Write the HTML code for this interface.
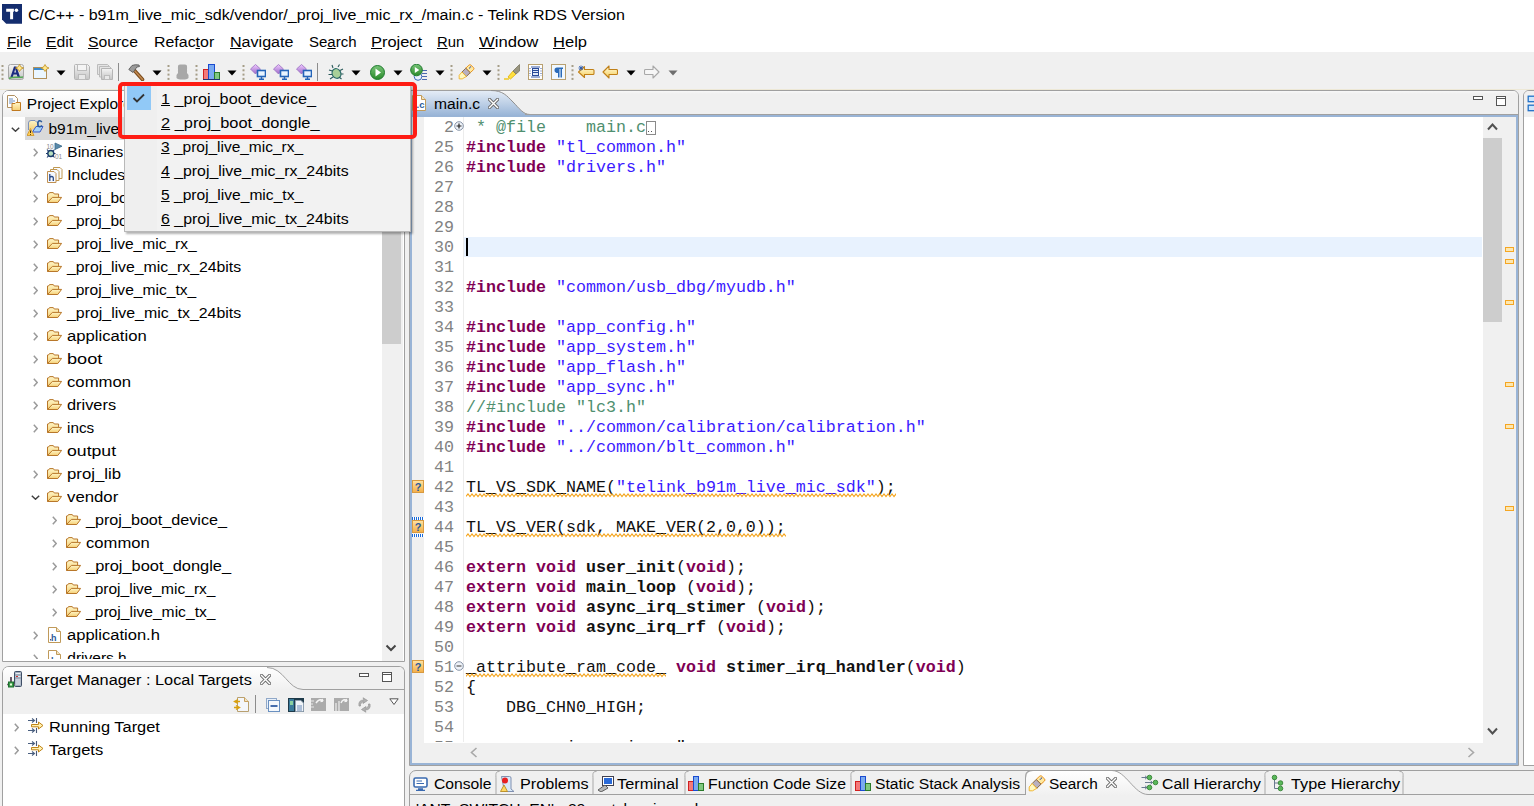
<!DOCTYPE html>
<html><head><meta charset="utf-8"><style>
html,body{margin:0;padding:0;}
body{width:1534px;height:806px;overflow:hidden;position:relative;background:#f0f0f0;font-family:"Liberation Sans",sans-serif;}
u{text-decoration:underline;text-decoration-thickness:1px;text-underline-offset:1px;}

</style></head><body>
<div style="position:absolute;left:0px;top:0px;width:1534px;height:52px;background:#fff"></div>
<svg style="position:absolute;left:0px;top:2px" width="26" height="24" viewBox="0 0 26 24">
<path d="M2 2H22V21.8H6.2L2 17.6Z" fill="#142d6e"/>
<path d="M6.2 6.8H13.9V9.8H13.1V17.3H10.1V9.8H6.2Z" fill="#fff"/>
<circle cx="16.4" cy="8.3" r="1.8" fill="#fff"/>
</svg>
<div id="t1" style="position:absolute;left:27.5px;top:6px;font:normal 15.5px/18px 'Liberation Sans', sans-serif;color:#000;white-space:pre;transform:scaleX(1.0362);transform-origin:0 0;">C/C++ - b91m_live_mic_sdk/vendor/_proj_live_mic_rx_/main.c - Telink RDS Version</div>
<div id="t2" style="position:absolute;left:7.3px;top:33px;font:normal 15.5px/18px 'Liberation Sans', sans-serif;color:#000;white-space:pre;transform:scaleX(0.9766);transform-origin:0 0;"><u>F</u>ile</div>
<div id="t3" style="position:absolute;left:46.3px;top:33px;font:normal 15.5px/18px 'Liberation Sans', sans-serif;color:#000;white-space:pre;transform:scaleX(1.0180);transform-origin:0 0;"><u>E</u>dit</div>
<div id="t4" style="position:absolute;left:88px;top:33px;font:normal 15.5px/18px 'Liberation Sans', sans-serif;color:#000;white-space:pre;transform:scaleX(1.0178);transform-origin:0 0;"><u>S</u>ource</div>
<div id="t5" style="position:absolute;left:153.8px;top:33px;font:normal 15.5px/18px 'Liberation Sans', sans-serif;color:#000;white-space:pre;transform:scaleX(1.0271);transform-origin:0 0;">Refac<u>t</u>or</div>
<div id="t6" style="position:absolute;left:229.6px;top:33px;font:normal 15.5px/18px 'Liberation Sans', sans-serif;color:#000;white-space:pre;transform:scaleX(1.0362);transform-origin:0 0;"><u>N</u>avigate</div>
<div id="t7" style="position:absolute;left:308.8px;top:33px;font:normal 15.5px/18px 'Liberation Sans', sans-serif;color:#000;white-space:pre;transform:scaleX(0.9666);transform-origin:0 0;">Se<u>a</u>rch</div>
<div id="t8" style="position:absolute;left:371.4px;top:33px;font:normal 15.5px/18px 'Liberation Sans', sans-serif;color:#000;white-space:pre;transform:scaleX(1.0591);transform-origin:0 0;"><u>P</u>roject</div>
<div id="t9" style="position:absolute;left:437px;top:33px;font:normal 15.5px/18px 'Liberation Sans', sans-serif;color:#000;white-space:pre;transform:scaleX(0.9560);transform-origin:0 0;"><u>R</u>un</div>
<div id="t10" style="position:absolute;left:479.4px;top:33px;font:normal 15.5px/18px 'Liberation Sans', sans-serif;color:#000;white-space:pre;transform:scaleX(1.0736);transform-origin:0 0;"><u>W</u>indow</div>
<div id="t11" style="position:absolute;left:553.2px;top:33px;font:normal 15.5px/18px 'Liberation Sans', sans-serif;color:#000;white-space:pre;transform:scaleX(1.0661);transform-origin:0 0;"><u>H</u>elp</div>
<div style="position:absolute;left:0px;top:89px;width:1534px;height:1px;background:#ede8d6"></div>
<div style="position:absolute;left:2px;top:90px;width:403px;height:572px;box-sizing:border-box;border:1px solid #a0a0a0;border-top-left-radius:7px;border-top-right-radius:6px;background:#fff;"></div>
<div style="position:absolute;left:3px;top:91px;width:401px;height:26px;background:linear-gradient(#fdfdfd,#f0f0f0);border-top-left-radius:6px;border-top-right-radius:5px;"></div>
<div style="position:absolute;left:382px;top:117px;width:21px;height:544px;background:#f0f0f0"></div>
<div style="position:absolute;left:382px;top:117px;width:19px;height:227px;background:#cdcdcd"></div>
<svg style="position:absolute;left:385px;top:643px" width="12" height="10"><path d="M1.5 2.5L6 7L10.5 2.5" stroke="#454545" stroke-width="2" fill="none"/></svg>
<div style="position:absolute;left:2px;top:666px;width:403px;height:140px;box-sizing:border-box;border:1px solid #a0a0a0;border-bottom:none;border-top-left-radius:7px;border-top-right-radius:6px;background:#fff;"></div>
<div style="position:absolute;left:3px;top:667px;width:401px;height:47px;background:#f0f0f0;border-top-left-radius:6px;border-top-right-radius:5px;"></div>
<div style="position:absolute;left:409px;top:90px;width:1110px;height:676px;box-sizing:border-box;border:1px solid #a0a0a0;border-top-right-radius:6px;background:#f0f0f0;"></div>
<div style="position:absolute;left:410px;top:91px;width:1108px;height:24px;background:linear-gradient(#f8f8f8 0,#f0f0f0 3px);border-top-right-radius:5px;"></div>
<div style="position:absolute;left:410px;top:114px;width:1108px;height:1px;background:#a0a0a0"></div>
<div style="position:absolute;left:410px;top:115px;width:1108px;height:650px;box-sizing:border-box;border:2px solid #99b4d6;border-top-width:2px;background:#f0f0f0;"></div>
<div style="position:absolute;left:424px;top:117px;width:1059px;height:626px;background:#fff"></div>
<div style="position:absolute;left:464px;top:237px;width:1018px;height:20px;background:#e8f2fe"></div>
<div style="position:absolute;left:1483px;top:138px;width:19px;height:184px;background:#cdcdcd"></div>
<div style="position:absolute;left:1523px;top:90px;width:20px;height:676px;box-sizing:border-box;border:1px solid #a0a0a0;border-top-left-radius:6px;background:#fff;"></div>
<div style="position:absolute;left:1524px;top:91px;width:12px;height:26px;background:#f0f0f0;border-top-left-radius:5px;"></div>
<div style="position:absolute;left:409px;top:770px;width:1130px;height:40px;box-sizing:border-box;border:1px solid #a0a0a0;border-top-left-radius:7px;background:#f0f0f0;"></div>
<div style="position:absolute;left:410px;top:794px;width:1130px;height:1px;background:#a0a0a0"></div>
<svg width="0" height="0" style="position:absolute">
<defs>
<linearGradient id="gfold" x1="0" y1="0" x2="0" y2="1"><stop offset="0" stop-color="#fff6c8"/><stop offset="1" stop-color="#f5cf74"/></linearGradient>
<symbol id="folder" viewBox="0 0 15 11">
<path d="M0.5 10.5V2H1.5L2.5 0.6H6.3L7.3 2H11.6V5.4" fill="url(#gfold)" stroke="#b8772a" stroke-width="1"/>
<path d="M0.5 10.5L5.4 5.4H14.6L10.8 10.5Z" fill="url(#gfold)" stroke="#b8772a" stroke-width="1" stroke-linejoin="round"/>
</symbol>
<symbol id="chevr" viewBox="0 0 5 9"><path d="M0.8 0.8L4.2 4.5L0.8 8.2" fill="none" stroke="#9a9a9a" stroke-width="1.5"/></symbol>
<symbol id="chevd" viewBox="0 0 9 5"><path d="M0.8 0.8L4.5 4.2L8.2 0.8" fill="none" stroke="#404040" stroke-width="1.5"/></symbol>
<symbol id="hfile" viewBox="0 0 13 16">
<path d="M0.5 0.5H8.5L12.5 4.5V15.5H0.5Z" fill="#fff" stroke="#c09a5a"/>
<path d="M8.5 0.5V4.5H12.5" fill="#f3e3bf" stroke="#c09a5a"/>
<text x="3" y="13.5" font-family="Liberation Sans" font-weight="bold" font-size="9" fill="#2c5a9a">h</text>
<rect x="2" y="12" width="1.2" height="1.5" fill="#2c5a9a"/>
</symbol>
</defs></svg>
<div style="position:absolute;left:25px;top:117px;width:357px;height:23px;background:#d9d9d9"></div>
<div style="position:absolute;left:4px;top:116px;width:378px;height:543px;overflow:hidden">
<svg style="position:absolute;left:7px;top:10.5px" width="9" height="5"><use href="#chevd"/></svg>
<div id="t12" style="position:absolute;left:44.5px;top:3.5999999999999943px;font:normal 15.5px/18px 'Liberation Sans', sans-serif;color:#000;white-space:pre;">b91m_live_mic_sdk</div>
<svg style="position:absolute;left:29px;top:32px" width="5" height="9"><use href="#chevr"/></svg>
<div id="t13" style="position:absolute;left:63.3px;top:26.599999999999994px;font:normal 15.5px/18px 'Liberation Sans', sans-serif;color:#000;white-space:pre;">Binaries</div>
<svg style="position:absolute;left:29px;top:55px" width="5" height="9"><use href="#chevr"/></svg>
<div id="t14" style="position:absolute;left:63.3px;top:49.599999999999994px;font:normal 15.5px/18px 'Liberation Sans', sans-serif;color:#000;white-space:pre;">Includes</div>
<svg style="position:absolute;left:29px;top:78px" width="5" height="9"><use href="#chevr"/></svg>
<svg style="position:absolute;left:43.3px;top:76px" width="15" height="11"><use href="#folder" width="15" height="11"/></svg>
<div id="t15" style="position:absolute;left:63.3px;top:72.6px;font:normal 15.5px/18px 'Liberation Sans', sans-serif;color:#000;white-space:pre;">_proj_boot_device_</div>
<svg style="position:absolute;left:29px;top:101px" width="5" height="9"><use href="#chevr"/></svg>
<svg style="position:absolute;left:43.3px;top:99px" width="15" height="11"><use href="#folder" width="15" height="11"/></svg>
<div id="t16" style="position:absolute;left:63.3px;top:95.6px;font:normal 15.5px/18px 'Liberation Sans', sans-serif;color:#000;white-space:pre;">_proj_boot_dongle_</div>
<svg style="position:absolute;left:29px;top:124px" width="5" height="9"><use href="#chevr"/></svg>
<svg style="position:absolute;left:43.3px;top:122px" width="15" height="11"><use href="#folder" width="15" height="11"/></svg>
<div id="t17" style="position:absolute;left:63.3px;top:118.6px;font:normal 15.5px/18px 'Liberation Sans', sans-serif;color:#000;white-space:pre;transform:scaleX(1.0036);transform-origin:0 0;">_proj_live_mic_rx_</div>
<svg style="position:absolute;left:29px;top:147px" width="5" height="9"><use href="#chevr"/></svg>
<svg style="position:absolute;left:43.3px;top:145px" width="15" height="11"><use href="#folder" width="15" height="11"/></svg>
<div id="t18" style="position:absolute;left:63.3px;top:141.60000000000002px;font:normal 15.5px/18px 'Liberation Sans', sans-serif;color:#000;white-space:pre;transform:scaleX(1.0211);transform-origin:0 0;">_proj_live_mic_rx_24bits</div>
<svg style="position:absolute;left:29px;top:170px" width="5" height="9"><use href="#chevr"/></svg>
<svg style="position:absolute;left:43.3px;top:168px" width="15" height="11"><use href="#folder" width="15" height="11"/></svg>
<div id="t19" style="position:absolute;left:63.3px;top:164.60000000000002px;font:normal 15.5px/18px 'Liberation Sans', sans-serif;color:#000;white-space:pre;transform:scaleX(1.0072);transform-origin:0 0;">_proj_live_mic_tx_</div>
<svg style="position:absolute;left:29px;top:193px" width="5" height="9"><use href="#chevr"/></svg>
<svg style="position:absolute;left:43.3px;top:191px" width="15" height="11"><use href="#folder" width="15" height="11"/></svg>
<div id="t20" style="position:absolute;left:63.3px;top:187.60000000000002px;font:normal 15.5px/18px 'Liberation Sans', sans-serif;color:#000;white-space:pre;transform:scaleX(1.0263);transform-origin:0 0;">_proj_live_mic_tx_24bits</div>
<svg style="position:absolute;left:29px;top:216px" width="5" height="9"><use href="#chevr"/></svg>
<svg style="position:absolute;left:43.3px;top:214px" width="15" height="11"><use href="#folder" width="15" height="11"/></svg>
<div id="t21" style="position:absolute;left:63.3px;top:210.60000000000002px;font:normal 15.5px/18px 'Liberation Sans', sans-serif;color:#000;white-space:pre;transform:scaleX(1.0754);transform-origin:0 0;">application</div>
<svg style="position:absolute;left:29px;top:239px" width="5" height="9"><use href="#chevr"/></svg>
<svg style="position:absolute;left:43.3px;top:237px" width="15" height="11"><use href="#folder" width="15" height="11"/></svg>
<div id="t22" style="position:absolute;left:63.3px;top:233.60000000000002px;font:normal 15.5px/18px 'Liberation Sans', sans-serif;color:#000;white-space:pre;transform:scaleX(1.1733);transform-origin:0 0;">boot</div>
<svg style="position:absolute;left:29px;top:262px" width="5" height="9"><use href="#chevr"/></svg>
<svg style="position:absolute;left:43.3px;top:260px" width="15" height="11"><use href="#folder" width="15" height="11"/></svg>
<div id="t23" style="position:absolute;left:63.3px;top:256.6px;font:normal 15.5px/18px 'Liberation Sans', sans-serif;color:#000;white-space:pre;transform:scaleX(1.0784);transform-origin:0 0;">common</div>
<svg style="position:absolute;left:29px;top:285px" width="5" height="9"><use href="#chevr"/></svg>
<svg style="position:absolute;left:43.3px;top:283px" width="15" height="11"><use href="#folder" width="15" height="11"/></svg>
<div id="t24" style="position:absolute;left:63.3px;top:279.6px;font:normal 15.5px/18px 'Liberation Sans', sans-serif;color:#000;white-space:pre;transform:scaleX(1.0556);transform-origin:0 0;">drivers</div>
<svg style="position:absolute;left:29px;top:308px" width="5" height="9"><use href="#chevr"/></svg>
<svg style="position:absolute;left:43.3px;top:306px" width="15" height="11"><use href="#folder" width="15" height="11"/></svg>
<div id="t25" style="position:absolute;left:63.3px;top:302.6px;font:normal 15.5px/18px 'Liberation Sans', sans-serif;color:#000;white-space:pre;transform:scaleX(0.9863);transform-origin:0 0;">incs</div>
<svg style="position:absolute;left:43.3px;top:329px" width="15" height="11"><use href="#folder" width="15" height="11"/></svg>
<div id="t26" style="position:absolute;left:63.3px;top:325.6px;font:normal 15.5px/18px 'Liberation Sans', sans-serif;color:#000;white-space:pre;transform:scaleX(1.1390);transform-origin:0 0;">output</div>
<svg style="position:absolute;left:29px;top:354px" width="5" height="9"><use href="#chevr"/></svg>
<svg style="position:absolute;left:43.3px;top:352px" width="15" height="11"><use href="#folder" width="15" height="11"/></svg>
<div id="t27" style="position:absolute;left:63.3px;top:348.6px;font:normal 15.5px/18px 'Liberation Sans', sans-serif;color:#000;white-space:pre;transform:scaleX(1.0803);transform-origin:0 0;">proj_lib</div>
<svg style="position:absolute;left:26.5px;top:378.5px" width="9" height="5"><use href="#chevd"/></svg>
<svg style="position:absolute;left:43.3px;top:375px" width="15" height="11"><use href="#folder" width="15" height="11"/></svg>
<div id="t28" style="position:absolute;left:63.3px;top:371.6px;font:normal 15.5px/18px 'Liberation Sans', sans-serif;color:#000;white-space:pre;transform:scaleX(1.0821);transform-origin:0 0;">vendor</div>
<svg style="position:absolute;left:48px;top:400px" width="5" height="9"><use href="#chevr"/></svg>
<svg style="position:absolute;left:62.3px;top:398px" width="15" height="11"><use href="#folder" width="15" height="11"/></svg>
<div id="t29" style="position:absolute;left:82.3px;top:394.6px;font:normal 15.5px/18px 'Liberation Sans', sans-serif;color:#000;white-space:pre;transform:scaleX(1.0420);transform-origin:0 0;">_proj_boot_device_</div>
<svg style="position:absolute;left:48px;top:423px" width="5" height="9"><use href="#chevr"/></svg>
<svg style="position:absolute;left:62.3px;top:421px" width="15" height="11"><use href="#folder" width="15" height="11"/></svg>
<div id="t30" style="position:absolute;left:82.3px;top:417.6px;font:normal 15.5px/18px 'Liberation Sans', sans-serif;color:#000;white-space:pre;transform:scaleX(1.0717);transform-origin:0 0;">common</div>
<svg style="position:absolute;left:48px;top:446px" width="5" height="9"><use href="#chevr"/></svg>
<svg style="position:absolute;left:62.3px;top:444px" width="15" height="11"><use href="#folder" width="15" height="11"/></svg>
<div id="t31" style="position:absolute;left:82.3px;top:440.6px;font:normal 15.5px/18px 'Liberation Sans', sans-serif;color:#000;white-space:pre;transform:scaleX(1.0588);transform-origin:0 0;">_proj_boot_dongle_</div>
<svg style="position:absolute;left:48px;top:469px" width="5" height="9"><use href="#chevr"/></svg>
<svg style="position:absolute;left:62.3px;top:467px" width="15" height="11"><use href="#folder" width="15" height="11"/></svg>
<div id="t32" style="position:absolute;left:82.3px;top:463.6px;font:normal 15.5px/18px 'Liberation Sans', sans-serif;color:#000;white-space:pre;transform:scaleX(1.0021);transform-origin:0 0;">_proj_live_mic_rx_</div>
<svg style="position:absolute;left:48px;top:492px" width="5" height="9"><use href="#chevr"/></svg>
<svg style="position:absolute;left:62.3px;top:490px" width="15" height="11"><use href="#folder" width="15" height="11"/></svg>
<div id="t33" style="position:absolute;left:82.3px;top:486.6px;font:normal 15.5px/18px 'Liberation Sans', sans-serif;color:#000;white-space:pre;transform:scaleX(1.0088);transform-origin:0 0;">_proj_live_mic_tx_</div>
<svg style="position:absolute;left:29px;top:515px" width="5" height="9"><use href="#chevr"/></svg>
<svg style="position:absolute;left:44.3px;top:511px" width="13" height="16"><use href="#hfile" width="13" height="16"/></svg>
<div id="t34" style="position:absolute;left:63.3px;top:509.6px;font:normal 15.5px/18px 'Liberation Sans', sans-serif;color:#000;white-space:pre;transform:scaleX(1.0672);transform-origin:0 0;">application.h</div>
<svg style="position:absolute;left:29px;top:538px" width="5" height="9"><use href="#chevr"/></svg>
<svg style="position:absolute;left:44.3px;top:534px" width="13" height="16"><use href="#hfile" width="13" height="16"/></svg>
<div id="t35" style="position:absolute;left:63.3px;top:532.6px;font:normal 15.5px/18px 'Liberation Sans', sans-serif;color:#000;white-space:pre;">drivers.h</div>
</div>
<div style="position:absolute;left:424px;top:117px;width:1059px;height:625px;overflow:hidden">
<div style="position:absolute;left:0;width:30px;text-align:right;top:1px;font:16.6667px/20px 'Liberation Mono', monospace;color:#828282;white-space:pre">2</div>
<div style="position:absolute;left:42px;top:1px;font:16.6667px/20px 'Liberation Mono', monospace;color:#111;white-space:pre"><span style="color:#4f8f6f"> * @file    main.c</span></div>
<div style="position:absolute;left:0;width:30px;text-align:right;top:21px;font:16.6667px/20px 'Liberation Mono', monospace;color:#828282;white-space:pre">25</div>
<div style="position:absolute;left:42px;top:21px;font:16.6667px/20px 'Liberation Mono', monospace;color:#111;white-space:pre"><span style="color:#7f0055;font-weight:bold">#include</span> <span style="color:#3a1aff">"tl_common.h"</span></div>
<div style="position:absolute;left:0;width:30px;text-align:right;top:41px;font:16.6667px/20px 'Liberation Mono', monospace;color:#828282;white-space:pre">26</div>
<div style="position:absolute;left:42px;top:41px;font:16.6667px/20px 'Liberation Mono', monospace;color:#111;white-space:pre"><span style="color:#7f0055;font-weight:bold">#include</span> <span style="color:#3a1aff">"drivers.h"</span></div>
<div style="position:absolute;left:0;width:30px;text-align:right;top:61px;font:16.6667px/20px 'Liberation Mono', monospace;color:#828282;white-space:pre">27</div>
<div style="position:absolute;left:0;width:30px;text-align:right;top:81px;font:16.6667px/20px 'Liberation Mono', monospace;color:#828282;white-space:pre">28</div>
<div style="position:absolute;left:0;width:30px;text-align:right;top:101px;font:16.6667px/20px 'Liberation Mono', monospace;color:#828282;white-space:pre">29</div>
<div style="position:absolute;left:0;width:30px;text-align:right;top:121px;font:16.6667px/20px 'Liberation Mono', monospace;color:#828282;white-space:pre">30</div>
<div style="position:absolute;left:0;width:30px;text-align:right;top:141px;font:16.6667px/20px 'Liberation Mono', monospace;color:#828282;white-space:pre">31</div>
<div style="position:absolute;left:0;width:30px;text-align:right;top:161px;font:16.6667px/20px 'Liberation Mono', monospace;color:#828282;white-space:pre">32</div>
<div style="position:absolute;left:42px;top:161px;font:16.6667px/20px 'Liberation Mono', monospace;color:#111;white-space:pre"><span style="color:#7f0055;font-weight:bold">#include</span> <span style="color:#3a1aff">"common/usb_dbg/myudb.h"</span></div>
<div style="position:absolute;left:0;width:30px;text-align:right;top:181px;font:16.6667px/20px 'Liberation Mono', monospace;color:#828282;white-space:pre">33</div>
<div style="position:absolute;left:0;width:30px;text-align:right;top:201px;font:16.6667px/20px 'Liberation Mono', monospace;color:#828282;white-space:pre">34</div>
<div style="position:absolute;left:42px;top:201px;font:16.6667px/20px 'Liberation Mono', monospace;color:#111;white-space:pre"><span style="color:#7f0055;font-weight:bold">#include</span> <span style="color:#3a1aff">"app_config.h"</span></div>
<div style="position:absolute;left:0;width:30px;text-align:right;top:221px;font:16.6667px/20px 'Liberation Mono', monospace;color:#828282;white-space:pre">35</div>
<div style="position:absolute;left:42px;top:221px;font:16.6667px/20px 'Liberation Mono', monospace;color:#111;white-space:pre"><span style="color:#7f0055;font-weight:bold">#include</span> <span style="color:#3a1aff">"app_system.h"</span></div>
<div style="position:absolute;left:0;width:30px;text-align:right;top:241px;font:16.6667px/20px 'Liberation Mono', monospace;color:#828282;white-space:pre">36</div>
<div style="position:absolute;left:42px;top:241px;font:16.6667px/20px 'Liberation Mono', monospace;color:#111;white-space:pre"><span style="color:#7f0055;font-weight:bold">#include</span> <span style="color:#3a1aff">"app_flash.h"</span></div>
<div style="position:absolute;left:0;width:30px;text-align:right;top:261px;font:16.6667px/20px 'Liberation Mono', monospace;color:#828282;white-space:pre">37</div>
<div style="position:absolute;left:42px;top:261px;font:16.6667px/20px 'Liberation Mono', monospace;color:#111;white-space:pre"><span style="color:#7f0055;font-weight:bold">#include</span> <span style="color:#3a1aff">"app_sync.h"</span></div>
<div style="position:absolute;left:0;width:30px;text-align:right;top:281px;font:16.6667px/20px 'Liberation Mono', monospace;color:#828282;white-space:pre">38</div>
<div style="position:absolute;left:42px;top:281px;font:16.6667px/20px 'Liberation Mono', monospace;color:#111;white-space:pre"><span style="color:#4f8f6f">//#include "lc3.h"</span></div>
<div style="position:absolute;left:0;width:30px;text-align:right;top:301px;font:16.6667px/20px 'Liberation Mono', monospace;color:#828282;white-space:pre">39</div>
<div style="position:absolute;left:42px;top:301px;font:16.6667px/20px 'Liberation Mono', monospace;color:#111;white-space:pre"><span style="color:#7f0055;font-weight:bold">#include</span> <span style="color:#3a1aff">"../common/calibration/calibration.h"</span></div>
<div style="position:absolute;left:0;width:30px;text-align:right;top:321px;font:16.6667px/20px 'Liberation Mono', monospace;color:#828282;white-space:pre">40</div>
<div style="position:absolute;left:42px;top:321px;font:16.6667px/20px 'Liberation Mono', monospace;color:#111;white-space:pre"><span style="color:#7f0055;font-weight:bold">#include</span> <span style="color:#3a1aff">"../common/blt_common.h"</span></div>
<div style="position:absolute;left:0;width:30px;text-align:right;top:341px;font:16.6667px/20px 'Liberation Mono', monospace;color:#828282;white-space:pre">41</div>
<div style="position:absolute;left:0;width:30px;text-align:right;top:361px;font:16.6667px/20px 'Liberation Mono', monospace;color:#828282;white-space:pre">42</div>
<div style="position:absolute;left:42px;top:361px;font:16.6667px/20px 'Liberation Mono', monospace;color:#111;white-space:pre">TL_VS_SDK_NAME(<span style="color:#3a1aff">"telink_b91m_live_mic_sdk"</span>);</div>
<div style="position:absolute;left:0;width:30px;text-align:right;top:381px;font:16.6667px/20px 'Liberation Mono', monospace;color:#828282;white-space:pre">43</div>
<div style="position:absolute;left:0;width:30px;text-align:right;top:401px;font:16.6667px/20px 'Liberation Mono', monospace;color:#828282;white-space:pre">44</div>
<div style="position:absolute;left:42px;top:401px;font:16.6667px/20px 'Liberation Mono', monospace;color:#111;white-space:pre">TL_VS_VER(sdk, MAKE_VER(2,0,0));</div>
<div style="position:absolute;left:0;width:30px;text-align:right;top:421px;font:16.6667px/20px 'Liberation Mono', monospace;color:#828282;white-space:pre">45</div>
<div style="position:absolute;left:0;width:30px;text-align:right;top:441px;font:16.6667px/20px 'Liberation Mono', monospace;color:#828282;white-space:pre">46</div>
<div style="position:absolute;left:42px;top:441px;font:16.6667px/20px 'Liberation Mono', monospace;color:#111;white-space:pre"><span style="color:#7f0055;font-weight:bold">extern</span> <span style="color:#7f0055;font-weight:bold">void</span> <span style="font-weight:bold">user_init</span>(<span style="color:#7f0055;font-weight:bold">void</span>);</div>
<div style="position:absolute;left:0;width:30px;text-align:right;top:461px;font:16.6667px/20px 'Liberation Mono', monospace;color:#828282;white-space:pre">47</div>
<div style="position:absolute;left:42px;top:461px;font:16.6667px/20px 'Liberation Mono', monospace;color:#111;white-space:pre"><span style="color:#7f0055;font-weight:bold">extern</span> <span style="color:#7f0055;font-weight:bold">void</span> <span style="font-weight:bold">main_loop</span> (<span style="color:#7f0055;font-weight:bold">void</span>);</div>
<div style="position:absolute;left:0;width:30px;text-align:right;top:481px;font:16.6667px/20px 'Liberation Mono', monospace;color:#828282;white-space:pre">48</div>
<div style="position:absolute;left:42px;top:481px;font:16.6667px/20px 'Liberation Mono', monospace;color:#111;white-space:pre"><span style="color:#7f0055;font-weight:bold">extern</span> <span style="color:#7f0055;font-weight:bold">void</span> <span style="font-weight:bold">async_irq_stimer</span> (<span style="color:#7f0055;font-weight:bold">void</span>);</div>
<div style="position:absolute;left:0;width:30px;text-align:right;top:501px;font:16.6667px/20px 'Liberation Mono', monospace;color:#828282;white-space:pre">49</div>
<div style="position:absolute;left:42px;top:501px;font:16.6667px/20px 'Liberation Mono', monospace;color:#111;white-space:pre"><span style="color:#7f0055;font-weight:bold">extern</span> <span style="color:#7f0055;font-weight:bold">void</span> <span style="font-weight:bold">async_irq_rf</span> (<span style="color:#7f0055;font-weight:bold">void</span>);</div>
<div style="position:absolute;left:0;width:30px;text-align:right;top:521px;font:16.6667px/20px 'Liberation Mono', monospace;color:#828282;white-space:pre">50</div>
<div style="position:absolute;left:0;width:30px;text-align:right;top:541px;font:16.6667px/20px 'Liberation Mono', monospace;color:#828282;white-space:pre">51</div>
<div style="position:absolute;left:42px;top:541px;font:16.6667px/20px 'Liberation Mono', monospace;color:#111;white-space:pre">_attribute_ram_code_ <span style="color:#7f0055;font-weight:bold">void</span> <span style="font-weight:bold">stimer_irq_handler</span>(<span style="color:#7f0055;font-weight:bold">void</span>)</div>
<div style="position:absolute;left:0;width:30px;text-align:right;top:561px;font:16.6667px/20px 'Liberation Mono', monospace;color:#828282;white-space:pre">52</div>
<div style="position:absolute;left:42px;top:561px;font:16.6667px/20px 'Liberation Mono', monospace;color:#111;white-space:pre">{</div>
<div style="position:absolute;left:0;width:30px;text-align:right;top:581px;font:16.6667px/20px 'Liberation Mono', monospace;color:#828282;white-space:pre">53</div>
<div style="position:absolute;left:42px;top:581px;font:16.6667px/20px 'Liberation Mono', monospace;color:#111;white-space:pre">    DBG_CHN0_HIGH;</div>
<div style="position:absolute;left:0;width:30px;text-align:right;top:601px;font:16.6667px/20px 'Liberation Mono', monospace;color:#828282;white-space:pre">54</div>
<div style="position:absolute;left:0;width:30px;text-align:right;top:621px;font:16.6667px/20px 'Liberation Mono', monospace;color:#828282;white-space:pre">55</div>
<div style="position:absolute;left:42px;top:621px;font:16.6667px/20px 'Liberation Mono', monospace;color:#111;white-space:pre">          i     i    "</div>
</div>
<div style="position:absolute;left:463px;top:117px;width:1px;height:625px;background:#ececec"></div>
<div style="position:absolute;left:646px;top:121px;width:10px;height:14px;box-sizing:border-box;border:1px solid #8a8a8a;background:#fff"></div>
<div style="position:absolute;left:648px;top:131px;width:1px;height:1px;background:#555"></div><div style="position:absolute;left:651px;top:131px;width:1px;height:1px;background:#555"></div>
<svg style="position:absolute;left:454px;top:121px" width="10" height="10"><circle cx="5" cy="5" r="4.3" fill="#eef2f8" stroke="#8894a8" stroke-width="1"/><path d="M2.5 5H7.5M5 2.5V7.5" stroke="#222" stroke-width="1.2"/></svg>
<svg style="position:absolute;left:454px;top:661px" width="10" height="10"><circle cx="5" cy="5" r="4.3" fill="#eef2f8" stroke="#8894a8" stroke-width="1"/><path d="M2.5 5H7.5" stroke="#555" stroke-width="1.2"/></svg>
<div style="position:absolute;left:466px;top:238px;width:2px;height:18px;background:#000"></div>
<svg style="position:absolute;left:466px;top:493px" width="430" height="5"><path d="M0 3.5 L2 1 L4 3.5 L6 1 L8 3.5 L10 1 L12 3.5 L14 1 L16 3.5 L18 1 L20 3.5 L22 1 L24 3.5 L26 1 L28 3.5 L30 1 L32 3.5 L34 1 L36 3.5 L38 1 L40 3.5 L42 1 L44 3.5 L46 1 L48 3.5 L50 1 L52 3.5 L54 1 L56 3.5 L58 1 L60 3.5 L62 1 L64 3.5 L66 1 L68 3.5 L70 1 L72 3.5 L74 1 L76 3.5 L78 1 L80 3.5 L82 1 L84 3.5 L86 1 L88 3.5 L90 1 L92 3.5 L94 1 L96 3.5 L98 1 L100 3.5 L102 1 L104 3.5 L106 1 L108 3.5 L110 1 L112 3.5 L114 1 L116 3.5 L118 1 L120 3.5 L122 1 L124 3.5 L126 1 L128 3.5 L130 1 L132 3.5 L134 1 L136 3.5 L138 1 L140 3.5 L142 1 L144 3.5 L146 1 L148 3.5 L150 1 L152 3.5 L154 1 L156 3.5 L158 1 L160 3.5 L162 1 L164 3.5 L166 1 L168 3.5 L170 1 L172 3.5 L174 1 L176 3.5 L178 1 L180 3.5 L182 1 L184 3.5 L186 1 L188 3.5 L190 1 L192 3.5 L194 1 L196 3.5 L198 1 L200 3.5 L202 1 L204 3.5 L206 1 L208 3.5 L210 1 L212 3.5 L214 1 L216 3.5 L218 1 L220 3.5 L222 1 L224 3.5 L226 1 L228 3.5 L230 1 L232 3.5 L234 1 L236 3.5 L238 1 L240 3.5 L242 1 L244 3.5 L246 1 L248 3.5 L250 1 L252 3.5 L254 1 L256 3.5 L258 1 L260 3.5 L262 1 L264 3.5 L266 1 L268 3.5 L270 1 L272 3.5 L274 1 L276 3.5 L278 1 L280 3.5 L282 1 L284 3.5 L286 1 L288 3.5 L290 1 L292 3.5 L294 1 L296 3.5 L298 1 L300 3.5 L302 1 L304 3.5 L306 1 L308 3.5 L310 1 L312 3.5 L314 1 L316 3.5 L318 1 L320 3.5 L322 1 L324 3.5 L326 1 L328 3.5 L330 1 L332 3.5 L334 1 L336 3.5 L338 1 L340 3.5 L342 1 L344 3.5 L346 1 L348 3.5 L350 1 L352 3.5 L354 1 L356 3.5 L358 1 L360 3.5 L362 1 L364 3.5 L366 1 L368 3.5 L370 1 L372 3.5 L374 1 L376 3.5 L378 1 L380 3.5 L382 1 L384 3.5 L386 1 L388 3.5 L390 1 L392 3.5 L394 1 L396 3.5 L398 1 L400 3.5 L402 1 L404 3.5 L406 1 L408 3.5 L410 1 L412 3.5 L414 1 L416 3.5 L418 1 L420 3.5 L422 1 L424 3.5 L426 1 L428 3.5 L430 1 L432 3.5" fill="none" stroke="#f4a41c" stroke-width="1.1"/></svg>
<svg style="position:absolute;left:466px;top:533px" width="320" height="5"><path d="M0 3.5 L2 1 L4 3.5 L6 1 L8 3.5 L10 1 L12 3.5 L14 1 L16 3.5 L18 1 L20 3.5 L22 1 L24 3.5 L26 1 L28 3.5 L30 1 L32 3.5 L34 1 L36 3.5 L38 1 L40 3.5 L42 1 L44 3.5 L46 1 L48 3.5 L50 1 L52 3.5 L54 1 L56 3.5 L58 1 L60 3.5 L62 1 L64 3.5 L66 1 L68 3.5 L70 1 L72 3.5 L74 1 L76 3.5 L78 1 L80 3.5 L82 1 L84 3.5 L86 1 L88 3.5 L90 1 L92 3.5 L94 1 L96 3.5 L98 1 L100 3.5 L102 1 L104 3.5 L106 1 L108 3.5 L110 1 L112 3.5 L114 1 L116 3.5 L118 1 L120 3.5 L122 1 L124 3.5 L126 1 L128 3.5 L130 1 L132 3.5 L134 1 L136 3.5 L138 1 L140 3.5 L142 1 L144 3.5 L146 1 L148 3.5 L150 1 L152 3.5 L154 1 L156 3.5 L158 1 L160 3.5 L162 1 L164 3.5 L166 1 L168 3.5 L170 1 L172 3.5 L174 1 L176 3.5 L178 1 L180 3.5 L182 1 L184 3.5 L186 1 L188 3.5 L190 1 L192 3.5 L194 1 L196 3.5 L198 1 L200 3.5 L202 1 L204 3.5 L206 1 L208 3.5 L210 1 L212 3.5 L214 1 L216 3.5 L218 1 L220 3.5 L222 1 L224 3.5 L226 1 L228 3.5 L230 1 L232 3.5 L234 1 L236 3.5 L238 1 L240 3.5 L242 1 L244 3.5 L246 1 L248 3.5 L250 1 L252 3.5 L254 1 L256 3.5 L258 1 L260 3.5 L262 1 L264 3.5 L266 1 L268 3.5 L270 1 L272 3.5 L274 1 L276 3.5 L278 1 L280 3.5 L282 1 L284 3.5 L286 1 L288 3.5 L290 1 L292 3.5 L294 1 L296 3.5 L298 1 L300 3.5 L302 1 L304 3.5 L306 1 L308 3.5 L310 1 L312 3.5 L314 1 L316 3.5 L318 1 L320 3.5" fill="none" stroke="#f4a41c" stroke-width="1.1"/></svg>
<svg style="position:absolute;left:466px;top:673px" width="200" height="5"><path d="M0 3.5 L2 1 L4 3.5 L6 1 L8 3.5 L10 1 L12 3.5 L14 1 L16 3.5 L18 1 L20 3.5 L22 1 L24 3.5 L26 1 L28 3.5 L30 1 L32 3.5 L34 1 L36 3.5 L38 1 L40 3.5 L42 1 L44 3.5 L46 1 L48 3.5 L50 1 L52 3.5 L54 1 L56 3.5 L58 1 L60 3.5 L62 1 L64 3.5 L66 1 L68 3.5 L70 1 L72 3.5 L74 1 L76 3.5 L78 1 L80 3.5 L82 1 L84 3.5 L86 1 L88 3.5 L90 1 L92 3.5 L94 1 L96 3.5 L98 1 L100 3.5 L102 1 L104 3.5 L106 1 L108 3.5 L110 1 L112 3.5 L114 1 L116 3.5 L118 1 L120 3.5 L122 1 L124 3.5 L126 1 L128 3.5 L130 1 L132 3.5 L134 1 L136 3.5 L138 1 L140 3.5 L142 1 L144 3.5 L146 1 L148 3.5 L150 1 L152 3.5 L154 1 L156 3.5 L158 1 L160 3.5 L162 1 L164 3.5 L166 1 L168 3.5 L170 1 L172 3.5 L174 1 L176 3.5 L178 1 L180 3.5 L182 1 L184 3.5 L186 1 L188 3.5 L190 1 L192 3.5 L194 1 L196 3.5 L198 1 L200 3.5" fill="none" stroke="#f4a41c" stroke-width="1.1"/></svg>
<div style="position:absolute;left:412px;top:480px;width:12px;height:13px;background:linear-gradient(#ffe1a0,#f3b04a);border:1px solid #d89a40;box-sizing:border-box;font:bold 11px/12px 'Liberation Sans', sans-serif;color:#2a5a9a;text-align:center">?</div>
<div style="position:absolute;left:412px;top:520px;width:12px;height:13px;background:linear-gradient(#ffe1a0,#f3b04a);border:1px solid #d89a40;box-sizing:border-box;font:bold 11px/12px 'Liberation Sans', sans-serif;color:#2a5a9a;text-align:center">?</div>
<div style="position:absolute;left:412px;top:660px;width:12px;height:13px;background:linear-gradient(#ffe1a0,#f3b04a);border:1px solid #d89a40;box-sizing:border-box;font:bold 11px/12px 'Liberation Sans', sans-serif;color:#2a5a9a;text-align:center">?</div>
<div style="position:absolute;left:412px;top:517px;width:12px;height:3px;background:repeating-linear-gradient(90deg,#1a6ad8 0 1px,#fff 1px 2px)"></div>
<div style="position:absolute;left:412px;top:534px;width:12px;height:3px;background:repeating-linear-gradient(90deg,#1a6ad8 0 1px,#fff 1px 2px)"></div>
<div style="position:absolute;left:1505px;top:247px;width:9px;height:5px;box-sizing:border-box;border:1px solid #f5a623;background:#fde7b0"></div>
<div style="position:absolute;left:1505px;top:259px;width:9px;height:5px;box-sizing:border-box;border:1px solid #f5a623;background:#fde7b0"></div>
<div style="position:absolute;left:1505px;top:300px;width:9px;height:5px;box-sizing:border-box;border:1px solid #f5a623;background:#fde7b0"></div>
<div style="position:absolute;left:1505px;top:382px;width:9px;height:5px;box-sizing:border-box;border:1px solid #f5a623;background:#fde7b0"></div>
<div style="position:absolute;left:1505px;top:424px;width:9px;height:5px;box-sizing:border-box;border:1px solid #f5a623;background:#fde7b0"></div>
<div style="position:absolute;left:1505px;top:506px;width:9px;height:5px;box-sizing:border-box;border:1px solid #f5a623;background:#fde7b0"></div>
<svg style="position:absolute;left:1487px;top:122px" width="11" height="9"><path d="M1 7.5L5.5 2.5L10 7.5" fill="none" stroke="#505050" stroke-width="2"/></svg>
<svg style="position:absolute;left:1487px;top:727px" width="11" height="9"><path d="M1 1.5L5.5 6.5L10 1.5" fill="none" stroke="#505050" stroke-width="2"/></svg>
<svg style="position:absolute;left:469px;top:747px" width="9" height="11"><path d="M7.5 1L2.5 5.5L7.5 10" fill="none" stroke="#a8a8a8" stroke-width="1.6"/></svg>
<svg style="position:absolute;left:1467px;top:747px" width="9" height="11"><path d="M1.5 1L6.5 5.5L1.5 10" fill="none" stroke="#a8a8a8" stroke-width="1.6"/></svg>
<svg style="position:absolute;left:3px;top:91px" width="200" height="26"><path d="M0 25V6Q0 0 6 0H150C160 0 165 25 180 25Z" fill="url(#gtabw)"/></svg>
<svg width="0" height="0" style="position:absolute"><defs>
<linearGradient id="gtabb" x1="0" y1="0" x2="0" y2="1"><stop offset="0" stop-color="#e4ecf6"/><stop offset="1" stop-color="#94b1d5"/></linearGradient>
<linearGradient id="gtabw" x1="0" y1="0" x2="0" y2="1"><stop offset="0" stop-color="#ffffff"/><stop offset="1" stop-color="#f0f0f0"/></linearGradient>
</defs></svg>
<svg style="position:absolute;left:410px;top:90px" width="140" height="27"><path d="M0 27V1H81C93 1 97 6 103 12C109 18 113 25 120 25H140V27Z" fill="url(#gtabb)"/><path d="M81 0.5C93 0.5 97 6 103 12C109 18 113 24.5 120 24.5H140" fill="none" stroke="#8f8f8f" stroke-width="1"/></svg>
<div style="position:absolute;left:525px;top:114px;width:993px;height:1px;background:#a0a0a0"></div>
<div style="position:absolute;left:410px;top:115px;width:1108px;height:2px;background:#99b4d6"></div>
<svg style="position:absolute;left:412px;top:95px" width="15" height="16"><path d="M0.5 0.5H9.5L13.5 4.5V15.5H0.5Z" fill="#fff" stroke="#c09a5a"/><path d="M9.5 0.5V4.5H13.5" fill="#f3e3bf" stroke="#c09a5a"/><text x="4.5" y="12.5" font-family="Liberation Sans" font-weight="bold" font-size="9.5" fill="#2c5a9a">.c</text></svg>
<div id="t36" style="position:absolute;left:433.7px;top:94.8px;font:normal 15.5px/18px 'Liberation Sans', sans-serif;color:#000;white-space:pre;transform:scaleX(1.0097);transform-origin:0 0;">main.c</div>
<svg style="position:absolute;left:488px;top:98px" width="11" height="11"><path d="M1.5 1.5L9.5 9.5M9.5 1.5L1.5 9.5" stroke="#6a6a6a" stroke-width="3.2" stroke-linecap="square"/><path d="M1.5 1.5L9.5 9.5M9.5 1.5L1.5 9.5" stroke="#fff" stroke-width="1.4" stroke-linecap="square"/></svg>
<div style="position:absolute;left:1473px;top:96px;width:10px;height:4px;box-sizing:border-box;border:1px solid #555;background:#fff"></div>
<div style="position:absolute;left:1496px;top:96px;width:10px;height:10px;box-sizing:border-box;border:1px solid #555;background:#fff"></div>
<div style="position:absolute;left:1497px;top:98px;width:8px;height:1px;background:#555"></div>
<svg style="position:absolute;left:7px;top:95px" width="16" height="16"><path d="M0.5 0.5H7.5L10.5 3.5V12.5H0.5Z" fill="#fff" stroke="#b09060"/><path d="M2 4H6M2 6H8M2 8H6" stroke="#6a8fc0"/><path d="M5 8.5H8L9 7.5H13.5V15.5H5Z" fill="url(#gfold)" stroke="#c07a20"/></svg>
<div id="t37" style="position:absolute;left:26.8px;top:95px;font:normal 15.5px/18px 'Liberation Sans', sans-serif;color:#000;white-space:pre;">Project Explorer</div>
<svg style="position:absolute;left:3px;top:667px" width="401" height="24"><path d="M0 23V6Q0 0 6 0H262C280 0 285 23 300 23Z" fill="url(#gtabw)"/><path d="M264 0.5C281 0.5 285 22.5 300 22.5H401" fill="none" stroke="#a0a0a0"/></svg>
<svg style="position:absolute;left:6px;top:670px" width="18" height="18"><rect x="8.5" y="1.5" width="7" height="15" rx="1" fill="#a0acbc" stroke="#3e4e66"/><path d="M9.5 3.5H14.5M9.5 6.5H14.5" stroke="#e8ecf0" stroke-width="1.2"/><path d="M10 6.5H12" stroke="#d03030"/><rect x="9.5" y="9" width="5" height="6" fill="#c8d0dc"/><path d="M4.5 7V12M5.5 7V12" stroke="#6a5a6a"/><path d="M1 14.5H9" stroke="#7a6a70" stroke-width="1.5"/><rect x="2.5" y="12" width="5" height="5" fill="#3a9a4a" stroke="#1e6e2e"/><rect x="4" y="13.5" width="2" height="2" fill="#e8ffd8"/></svg>
<div id="t38" style="position:absolute;left:26.6px;top:671px;font:normal 15.5px/18px 'Liberation Sans', sans-serif;color:#000;white-space:pre;transform:scaleX(1.0535);transform-origin:0 0;">Target Manager : Local Targets</div>
<svg style="position:absolute;left:260px;top:674px" width="11" height="11"><path d="M1.5 1.5L9.5 9.5M9.5 1.5L1.5 9.5" stroke="#6a6a6a" stroke-width="3.2" stroke-linecap="square"/><path d="M1.5 1.5L9.5 9.5M9.5 1.5L1.5 9.5" stroke="#fff" stroke-width="1.4" stroke-linecap="square"/></svg>
<div style="position:absolute;left:359px;top:673px;width:10px;height:4px;box-sizing:border-box;border:1px solid #555;background:#fff"></div>
<div style="position:absolute;left:382px;top:672px;width:10px;height:10px;box-sizing:border-box;border:1px solid #555;background:#fff"></div>
<div style="position:absolute;left:383px;top:674px;width:8px;height:1px;background:#555"></div>
<div style="position:absolute;left:3px;top:714px;width:401px;height:92px;background:#fff"></div>
<svg style="position:absolute;left:233px;top:697px" width="16" height="15"><path d="M4.5 0.5H11.5L15.5 4.5V14.5H4.5Z" fill="#f4f6fa" stroke="#b8a070"/><path d="M11.5 0.5V4.5H15.5" fill="#f3e3bf" stroke="#c8a060"/><path d="M5 2.5L1.5 4.5L5 6.5M1.5 4.5H7M3 8.5L6.5 10.5L3 12.5M6.5 10.5H1" stroke="#d8a010" stroke-width="1.4" fill="none"/></svg>
<div style="position:absolute;left:255px;top:695px;width:1px;height:18px;background:#8c8c8c"></div>
<svg style="position:absolute;left:266px;top:698px" width="14" height="14"><rect x="0.5" y="0.5" width="10" height="10" fill="#e8f0fa" stroke="#90a8c8"/><rect x="2.5" y="2.5" width="11" height="11" fill="#f4f8fc" stroke="#6a90c0"/><path d="M4.5 8H11.5" stroke="#1a4a98" stroke-width="1.6"/></svg>
<svg style="position:absolute;left:288px;top:698px" width="16" height="14"><rect x="0" y="0" width="16" height="14" fill="#1e3a4a"/><rect x="1" y="1" width="5" height="12" fill="#3a7a9a"/><rect x="2" y="3" width="3" height="4" fill="#8ad0a0"/><path d="M7.5 2.5H13L15.5 5V13.5H7.5Z" fill="#f0f4f8" stroke="#90a0b0"/><path d="M9 8H14M9 10H14M9 12H14" stroke="#6a8ab8"/></svg>
<svg style="position:absolute;left:310px;top:697px" width="17" height="15"><rect x="1" y="1" width="15" height="13" fill="#ababab"/><path d="M1 4H4M1 7H3M1 10H4" stroke="#e8e8e8"/><path d="M6 6Q9 1 13 4L12 2M13 4L10.5 4.5" stroke="#f4f4f4" stroke-width="1.5" fill="none"/></svg>
<svg style="position:absolute;left:333px;top:697px" width="17" height="15"><rect x="1" y="1" width="15" height="13" fill="#ababab"/><path d="M3 6V14M6 4V14" stroke="#eeeeee" stroke-width="1.2"/><path d="M8 6Q10 1 14 4L13 2M14 4L11.5 4.5" stroke="#f4f4f4" stroke-width="1.5" fill="none"/></svg>
<svg style="position:absolute;left:356px;top:697px" width="17" height="16"><path d="M3 9Q2 3 8 3L7 0.8L11.5 3.5L7 6.5L8 5Q4 5 4.5 9Z" fill="#b0b0b0" stroke="#9a9a9a" stroke-width="0.8"/><path d="M14 7Q15 13 9 13L10 15.2L5.5 12.5L10 9.5L9 11Q13 11 12.5 7Z" fill="#b0b0b0" stroke="#9a9a9a" stroke-width="0.8"/></svg>
<svg style="position:absolute;left:389px;top:698px" width="10" height="8"><path d="M0.8 0.8H9.2L5 6.5Z" fill="#fff" stroke="#555"/></svg>
<svg style="position:absolute;left:14px;top:723px" width="5" height="9"><use href="#chevr"/></svg>
<svg style="position:absolute;left:28px;top:717px" width="16" height="18"><path d="M0 3.5H6M4 1.5L6.5 3.5L4 5.5M0 13.5H6M4 11.5L6.5 13.5L4 15.5" stroke="#4a6080" stroke-width="1.1" fill="none"/><path d="M8.5 1V6M8.5 11V16" stroke="#4a5a78" stroke-width="1.1"/><path d="M3.5 7.5H10.5V5L15 8.5L10.5 12V9.8H3.5Z" fill="#fff2b0" stroke="#c08418" stroke-width="1" stroke-linejoin="round"/></svg>
<div id="t39" style="position:absolute;left:48.5px;top:717.6px;font:normal 15.5px/18px 'Liberation Sans', sans-serif;color:#000;white-space:pre;transform:scaleX(1.0576);transform-origin:0 0;">Running Target</div>
<svg style="position:absolute;left:14px;top:746px" width="5" height="9"><use href="#chevr"/></svg>
<svg style="position:absolute;left:28px;top:740px" width="16" height="18"><path d="M0 3.5H6M4 1.5L6.5 3.5L4 5.5M0 13.5H6M4 11.5L6.5 13.5L4 15.5" stroke="#4a6080" stroke-width="1.1" fill="none"/><path d="M8.5 1V6M8.5 11V16" stroke="#4a5a78" stroke-width="1.1"/><path d="M3.5 7.5H10.5V5L15 8.5L10.5 12V9.8H3.5Z" fill="#fff2b0" stroke="#c08418" stroke-width="1" stroke-linejoin="round"/></svg>
<div id="t40" style="position:absolute;left:48.5px;top:740.6px;font:normal 15.5px/18px 'Liberation Sans', sans-serif;color:#000;white-space:pre;transform:scaleX(1.0660);transform-origin:0 0;">Targets</div>
<div id="t41" style="position:absolute;left:433.5px;top:774.6px;font:normal 15.5px/18px 'Liberation Sans', sans-serif;color:#000;white-space:pre;transform:scaleX(1.0110);transform-origin:0 0;">Console</div>
<svg style="position:absolute;left:492px;top:771px" width="8" height="24"><path d="M7.5 0.5C3 0.5 4 3 4 8V23.5" fill="none" stroke="#a8a8a8"/></svg>
<div id="t42" style="position:absolute;left:520.2px;top:774.6px;font:normal 15.5px/18px 'Liberation Sans', sans-serif;color:#000;white-space:pre;transform:scaleX(1.0463);transform-origin:0 0;">Problems</div>
<svg style="position:absolute;left:589px;top:771px" width="8" height="24"><path d="M7.5 0.5C3 0.5 4 3 4 8V23.5" fill="none" stroke="#a8a8a8"/></svg>
<div id="t43" style="position:absolute;left:617.2px;top:774.6px;font:normal 15.5px/18px 'Liberation Sans', sans-serif;color:#000;white-space:pre;transform:scaleX(1.0516);transform-origin:0 0;">Terminal</div>
<svg style="position:absolute;left:680.5px;top:771px" width="8" height="24"><path d="M7.5 0.5C3 0.5 4 3 4 8V23.5" fill="none" stroke="#a8a8a8"/></svg>
<div id="t44" style="position:absolute;left:708px;top:774.6px;font:normal 15.5px/18px 'Liberation Sans', sans-serif;color:#000;white-space:pre;transform:scaleX(1.0201);transform-origin:0 0;">Function Code Size</div>
<svg style="position:absolute;left:847px;top:771px" width="8" height="24"><path d="M7.5 0.5C3 0.5 4 3 4 8V23.5" fill="none" stroke="#a8a8a8"/></svg>
<div id="t45" style="position:absolute;left:875px;top:774.6px;font:normal 15.5px/18px 'Liberation Sans', sans-serif;color:#000;white-space:pre;transform:scaleX(1.0139);transform-origin:0 0;">Static Stack Analysis</div>
<svg style="position:absolute;left:1021.5px;top:771px" width="8" height="24"><path d="M7.5 0.5C3 0.5 4 3 4 8V23.5" fill="none" stroke="#a8a8a8"/></svg>
<svg style="position:absolute;left:1022px;top:770px" width="140" height="26"><path d="M4 26V8Q4 1 11 1H90C104 1 112 24 126 24H140V26Z" fill="url(#gtabw)"/><path d="M3.5 24V8Q3.5 0.5 11 0.5H90C104 0.5 112 24.5 126 24.5H140" fill="none" stroke="#a0a0a0"/></svg>
<div id="t46" style="position:absolute;left:1049px;top:774.6px;font:normal 15.5px/18px 'Liberation Sans', sans-serif;color:#000;white-space:pre;transform:scaleX(0.9913);transform-origin:0 0;">Search</div>
<svg style="position:absolute;left:1106px;top:777px" width="11" height="11"><path d="M1.5 1.5L9.5 9.5M9.5 1.5L1.5 9.5" stroke="#6a6a6a" stroke-width="3.2" stroke-linecap="square"/><path d="M1.5 1.5L9.5 9.5M9.5 1.5L1.5 9.5" stroke="#fff" stroke-width="1.4" stroke-linecap="square"/></svg>
<div id="t47" style="position:absolute;left:1162px;top:774.6px;font:normal 15.5px/18px 'Liberation Sans', sans-serif;color:#000;white-space:pre;transform:scaleX(1.0170);transform-origin:0 0;">Call Hierarchy</div>
<svg style="position:absolute;left:1261px;top:771px" width="8" height="24"><path d="M7.5 0.5C3 0.5 4 3 4 8V23.5" fill="none" stroke="#a8a8a8"/></svg>
<div id="t48" style="position:absolute;left:1290.5px;top:774.6px;font:normal 15.5px/18px 'Liberation Sans', sans-serif;color:#000;white-space:pre;transform:scaleX(1.0476);transform-origin:0 0;">Type Hierarchy</div>
<svg style="position:absolute;left:1399px;top:771px" width="8" height="24"><path d="M0.5 0.5C5 0.5 4 3 4 8V23.5" fill="none" stroke="#a8a8a8"/></svg>
<div style="position:absolute;left:410px;top:794px;width:616px;height:1px;background:#a0a0a0"></div>
<div style="position:absolute;left:1148px;top:794px;width:386px;height:1px;background:#a0a0a0"></div>
<div id="t49" style="position:absolute;left:415.6px;top:799.5px;font:normal 15.5px/18px 'Liberation Sans', sans-serif;color:#000;white-space:pre;transform:scaleX(1.0089);transform-origin:0 0;">'ANT_SWITCH_EN' - 29 matches in workspace</div>
<svg width="0" height="0" style="position:absolute"><defs>
<linearGradient id="ggray" x1="0" y1="0" x2="0" y2="1"><stop offset="0" stop-color="#f4f4f4"/><stop offset="1" stop-color="#c4c4c4"/></linearGradient>
<linearGradient id="ggreen" x1="0" y1="0" x2="0" y2="1"><stop offset="0" stop-color="#78c478"/><stop offset="1" stop-color="#2a8a2a"/></linearGradient>
<linearGradient id="gyel" x1="0" y1="0" x2="0" y2="1"><stop offset="0" stop-color="#fffbe0"/><stop offset="1" stop-color="#f6cf5a"/></linearGradient>
<linearGradient id="gpur" x1="0" y1="0" x2="0" y2="1"><stop offset="0" stop-color="#f0c8ff"/><stop offset="1" stop-color="#9a6ac8"/></linearGradient>
<symbol id="remic" viewBox="0 0 16 16">
<path d="M5.5 0.5L10.5 5L5.5 10L0.5 5Z" fill="url(#gpur)" stroke="#9a70c0" stroke-width="0.8"/>
<rect x="7.5" y="6.5" width="8" height="6" fill="#e8f4ff" stroke="#2464b8" stroke-width="1.6"/>
<path d="M11.5 13V15M9 15.3H14" stroke="#2464b8" stroke-width="1.4"/>
</symbol>
<symbol id="flash" viewBox="0 0 18 17">
<path d="M11.5 1.2Q12.5 0.5 13.5 1L16.8 4.2Q17.3 5 16.5 6L13 9.2L8.2 4.5Z" fill="#ffe9a0" stroke="#e8901a" stroke-width="1"/>
<path d="M8.2 4.5L13 9.2L8.8 13.3L4.2 8.5Z" fill="#b8b0c0" stroke="#8a6a40" stroke-width="1"/>
<path d="M4.2 8.5L8.8 13.3L4.5 15.8H1.2V12Z" fill="#fff8c0" stroke="#f0b020" stroke-width="0.9"/>
<path d="M13 3.5L13.8 2.8M11.8 4.6L12.6 3.9" stroke="#2a4aa8" stroke-width="1.2"/>
</symbol>
</defs></svg>
<svg style="position:absolute;left:1px;top:64px" width="3" height="17" viewBox="0 0 3 17"><rect x="0.5" y="1.0" width="2" height="2" fill="#a59d88"/><rect x="0.5" y="5.3" width="2" height="2" fill="#a59d88"/><rect x="0.5" y="9.6" width="2" height="2" fill="#a59d88"/><rect x="0.5" y="13.899999999999999" width="2" height="2" fill="#a59d88"/></svg>
<svg style="position:absolute;left:8px;top:64px" width="16" height="16" viewBox="0 0 16 16"><rect x="0.5" y="0.5" width="15" height="15" rx="2" fill="url(#ggray)" stroke="#a8a8a8"/><path d="M2.5 13L6 2.5H8.5L12 13H9.5L8.8 10.5H5.5L4.8 13Z" fill="#1a2a80"/><path d="M6.2 8.5H8.2L7.2 5Z" fill="#d8d8d8"/><path d="M1 14.5C5 12 10 14 15 13" stroke="#55a855" stroke-width="1.5" fill="none"/><path d="M11.5 0.5L13 3L15.5 4L13 5.2L11.5 7.5L10 5.2L7.5 4L10 3Z" fill="#ffe890" stroke="#c09020" stroke-width="0.8"/></svg>
<svg style="position:absolute;left:33px;top:64px" width="16" height="16" viewBox="0 0 16 16"><rect x="0.5" y="3.5" width="13" height="11" fill="#eaf6ff" stroke="#b0905a"/><rect x="1" y="4" width="12" height="2" fill="#3a8ad0"/><path d="M12 0.5L13.5 3L16 4L13.5 5.2L12 7.5L10.5 5.2L8 4L10.5 3Z" fill="#ffe890" stroke="#c09020" stroke-width="0.8"/></svg>
<svg style="position:absolute;left:56px;top:70px" width="10" height="6" viewBox="0 0 10 6"><path d="M0.5 0.5H9.5L5 5.5Z" fill="#000"/></svg>
<svg style="position:absolute;left:74px;top:64px" width="16" height="16" viewBox="0 0 16 16"><path d="M0.5 1.5Q0.5 0.5 1.5 0.5H13.5L15.5 2.5V14.5Q15.5 15.5 14.5 15.5H1.5Q0.5 15.5 0.5 14.5Z" fill="url(#ggray)" stroke="#b4b4b4"/><rect x="3.5" y="0.5" width="9" height="6" fill="#f4f4f4" stroke="#bcbcbc"/><rect x="4.5" y="10.5" width="7" height="5" fill="#e8e8e8" stroke="#bcbcbc"/></svg>
<svg style="position:absolute;left:97px;top:64px" width="16" height="16" viewBox="0 0 16 16"><path d="M0.5 0.5H10.5L12.5 2.5V10.5H0.5Z" fill="#e4e4e4" stroke="#bcbcbc"/><path d="M2.5 2.5H12.5L14 4V13H2.5Z" fill="#e4e4e4" stroke="#bcbcbc"/><path d="M4.5 4.5H14.5L15.5 5.5V15.5H4.5Z" fill="url(#ggray)" stroke="#b4b4b4"/><rect x="7.5" y="11.5" width="5" height="4" fill="#e8e8e8" stroke="#bcbcbc"/></svg>
<div style="position:absolute;left:118px;top:63px;width:1px;height:18px;background:#8c8c8c"></div>
<svg style="position:absolute;left:128px;top:64px" width="17" height="17" viewBox="0 0 17 17"><path d="M6 6L14.5 15.5" stroke="#7a4a1a" stroke-width="3.6" stroke-linecap="round"/><path d="M6 6L14.5 15.5" stroke="#c08850" stroke-width="1.6" stroke-linecap="round"/><path d="M0.8 5.5L4 1.5Q7 0.2 11 1L11.5 2.5Q8 2.5 7.5 5L5 8.5Z" fill="#9a9a9a" stroke="#5a5a5a" stroke-width="0.9"/></svg>
<svg style="position:absolute;left:152px;top:70px" width="10" height="6" viewBox="0 0 10 6"><path d="M0.5 0.5H9.5L5 5.5Z" fill="#000"/></svg>
<svg style="position:absolute;left:167px;top:64px" width="3" height="17" viewBox="0 0 3 17"><rect x="0.5" y="1.0" width="2" height="2" fill="#a59d88"/><rect x="0.5" y="5.3" width="2" height="2" fill="#a59d88"/><rect x="0.5" y="9.6" width="2" height="2" fill="#a59d88"/><rect x="0.5" y="13.899999999999999" width="2" height="2" fill="#a59d88"/></svg>
<svg style="position:absolute;left:176px;top:64px" width="13" height="16" viewBox="0 0 13 16"><path d="M2 2Q2 0.5 4 0.5H9Q11 0.5 11 2V9L12.5 11V14Q11 15.5 6.5 15.5Q2 15.5 0.5 14V11L2 9Z" fill="#a8a8a8"/><path d="M1 4H2M1 7H2M11 4H12M11 7H12" stroke="#e8e8e8"/></svg>
<svg style="position:absolute;left:195px;top:64px" width="3" height="17" viewBox="0 0 3 17"><rect x="0.5" y="1.0" width="2" height="2" fill="#a59d88"/><rect x="0.5" y="5.3" width="2" height="2" fill="#a59d88"/><rect x="0.5" y="9.6" width="2" height="2" fill="#a59d88"/><rect x="0.5" y="13.899999999999999" width="2" height="2" fill="#a59d88"/></svg>
<svg style="position:absolute;left:203px;top:64px" width="17" height="16" viewBox="0 0 17 16"><rect x="0.5" y="5.5" width="5" height="10" fill="#f47a7a" stroke="#d02020"/><rect x="5.5" y="0.5" width="6" height="15" fill="#7aaaf0" stroke="#1a4ad0"/><rect x="11.5" y="8.5" width="5" height="7" fill="#80c880" stroke="#2a7a2a"/><path d="M0 15.5H17" stroke="#203070"/></svg>
<svg style="position:absolute;left:227px;top:70px" width="10" height="6" viewBox="0 0 10 6"><path d="M0.5 0.5H9.5L5 5.5Z" fill="#000"/></svg>
<svg style="position:absolute;left:242px;top:64px" width="3" height="17" viewBox="0 0 3 17"><rect x="0.5" y="1.0" width="2" height="2" fill="#a59d88"/><rect x="0.5" y="5.3" width="2" height="2" fill="#a59d88"/><rect x="0.5" y="9.6" width="2" height="2" fill="#a59d88"/><rect x="0.5" y="13.899999999999999" width="2" height="2" fill="#a59d88"/></svg>
<svg style="position:absolute;left:250px;top:64px" width="16" height="16"><use href="#remic" width="16" height="16"/></svg>
<svg style="position:absolute;left:273px;top:64px" width="16" height="16"><use href="#remic" width="16" height="16"/></svg>
<svg style="position:absolute;left:296px;top:64px" width="16" height="16"><use href="#remic" width="16" height="16"/></svg>
<div style="position:absolute;left:317px;top:63px;width:1px;height:18px;background:#8c8c8c"></div>
<svg style="position:absolute;left:328px;top:64px" width="16" height="17" viewBox="0 0 16 17"><ellipse cx="8.5" cy="9.5" rx="4.3" ry="5" fill="#a8d098" stroke="#2a6a6a" stroke-width="1.1" transform="rotate(-30 8.5 9.5)"/><path d="M5 4L4 1M10 3L11.5 0.5M1 6L4.5 7M0.5 10.5L4 10.5M2 15L5 13M15 5L12 6.5M15.5 10L12.8 10M13.5 15L11 13" stroke="#2a5a5a" stroke-width="1.1"/></svg>
<svg style="position:absolute;left:351px;top:70px" width="10" height="6" viewBox="0 0 10 6"><path d="M0.5 0.5H9.5L5 5.5Z" fill="#000"/></svg>
<svg style="position:absolute;left:370px;top:65px" width="15" height="15" viewBox="0 0 15 15"><circle cx="7.5" cy="7.5" r="7" fill="url(#ggreen)" stroke="#1e7a2e"/><path d="M5.5 3.5L11 7.5L5.5 11.5Z" fill="#fff"/></svg>
<svg style="position:absolute;left:393px;top:70px" width="10" height="6" viewBox="0 0 10 6"><path d="M0.5 0.5H9.5L5 5.5Z" fill="#000"/></svg>
<svg style="position:absolute;left:410px;top:64px" width="18" height="17" viewBox="0 0 18 17"><circle cx="8" cy="12.5" r="3.8" fill="#e8f0ff" stroke="#3a6ab8"/><path d="M12 6.5H17M12 9.5H17M12 12.5H17M12 15.5H17" stroke="#4a6ab0"/><circle cx="6.5" cy="6" r="5.8" fill="url(#ggreen)" stroke="#1e7a2e"/><path d="M4.8 3L9.3 6L4.8 9Z" fill="#fff"/></svg>
<svg style="position:absolute;left:435px;top:70px" width="10" height="6" viewBox="0 0 10 6"><path d="M0.5 0.5H9.5L5 5.5Z" fill="#000"/></svg>
<svg style="position:absolute;left:450px;top:64px" width="3" height="17" viewBox="0 0 3 17"><rect x="0.5" y="1.0" width="2" height="2" fill="#a59d88"/><rect x="0.5" y="5.3" width="2" height="2" fill="#a59d88"/><rect x="0.5" y="9.6" width="2" height="2" fill="#a59d88"/><rect x="0.5" y="13.899999999999999" width="2" height="2" fill="#a59d88"/></svg>
<svg style="position:absolute;left:458px;top:64px" width="17" height="16"><use href="#flash" width="17" height="16"/></svg>
<svg style="position:absolute;left:482px;top:70px" width="10" height="6" viewBox="0 0 10 6"><path d="M0.5 0.5H9.5L5 5.5Z" fill="#000"/></svg>
<svg style="position:absolute;left:497px;top:64px" width="3" height="17" viewBox="0 0 3 17"><rect x="0.5" y="1.0" width="2" height="2" fill="#a59d88"/><rect x="0.5" y="5.3" width="2" height="2" fill="#a59d88"/><rect x="0.5" y="9.6" width="2" height="2" fill="#a59d88"/><rect x="0.5" y="13.899999999999999" width="2" height="2" fill="#a59d88"/></svg>
<svg style="position:absolute;left:504px;top:64px" width="17" height="16" viewBox="0 0 17 16"><path d="M0 15H5" stroke="#f0c820" stroke-width="1.5"/><path d="M4 13L9 7L12 10L6.5 15Z" fill="#ffe040" stroke="#e0b000" stroke-width="0.8"/><path d="M9 7L15.5 0.5V7L12 10Z" fill="#9a9680" stroke="#7a7660" stroke-width="0.8"/></svg>
<svg style="position:absolute;left:528px;top:64px" width="15" height="16" viewBox="0 0 15 16"><rect x="0.5" y="0.5" width="14" height="15" fill="#fff" stroke="#b8a070"/><path d="M3 3H12M3 13H12" stroke="#3a5aa8"/><rect x="4.5" y="4.5" width="6" height="7" fill="#e0e8f8" stroke="#2a4a98"/><path d="M5 6.5H10M5 8.5H10" stroke="#2a4a98"/><path d="M2 4V12M13 4V12" stroke="#3a5aa8" stroke-dasharray="1 1.5"/></svg>
<svg style="position:absolute;left:551px;top:64px" width="15" height="16" viewBox="0 0 15 16"><rect x="0.5" y="0.5" width="14" height="15" fill="#f0f8ff" stroke="#b8a070"/><path d="M6 3.5H12V5H11V13.5H9.5V5H8.5V13.5H7V9Q3.5 9 3.5 6.2Q3.5 3.5 6 3.5Z" fill="#2a6ab8"/></svg>
<svg style="position:absolute;left:571px;top:64px" width="3" height="17" viewBox="0 0 3 17"><rect x="0.5" y="1.0" width="2" height="2" fill="#a59d88"/><rect x="0.5" y="5.3" width="2" height="2" fill="#a59d88"/><rect x="0.5" y="9.6" width="2" height="2" fill="#a59d88"/><rect x="0.5" y="13.899999999999999" width="2" height="2" fill="#a59d88"/></svg>
<svg style="position:absolute;left:577px;top:65px" width="18" height="14" viewBox="0 0 18 14"><path d="M1.5 7L7.5 1.5V4.5H16Q17 4.5 17 5.5V8.5Q17 9.5 16 9.5H7.5V12.5Z" fill="url(#gyel)" stroke="#c08018" stroke-width="1.1" stroke-linejoin="round"/><path d="M4 0.5V5.5M1.5 3H6.5M2.2 1.2L5.8 4.8M5.8 1.2L2.2 4.8" stroke="#2a5ab0" stroke-width="0.9"/></svg>
<svg style="position:absolute;left:602px;top:65px" width="16" height="14" viewBox="0 0 16 14"><path d="M1 7L7 1V4.5H14.5Q15.5 4.5 15.5 5.5V8.5Q15.5 9.5 14.5 9.5H7V13Z" fill="url(#gyel)" stroke="#c08018" stroke-width="1.1" stroke-linejoin="round"/></svg>
<svg style="position:absolute;left:626px;top:70px" width="10" height="6" viewBox="0 0 10 6"><path d="M0.5 0.5H9.5L5 5.5Z" fill="#000"/></svg>
<svg style="position:absolute;left:644px;top:65px" width="16" height="14" viewBox="0 0 16 14"><path d="M15 7L9 1V4.5H1.5Q0.5 4.5 0.5 5.5V8.5Q0.5 9.5 1.5 9.5H9V13Z" fill="#f6f6f6" stroke="#a8a8a8" stroke-width="1.1" stroke-linejoin="round"/></svg>
<svg style="position:absolute;left:668px;top:70px" width="10" height="6" viewBox="0 0 10 6"><path d="M0.5 0.5H9.5L5 5.5Z" fill="#6e6e6e"/></svg>
<svg style="position:absolute;left:27px;top:120px" width="17" height="17" viewBox="0 0 17 17"><path d="M1.5 10V3Q1.5 0.5 4 0.5H8L10 2.5H11V8" fill="url(#gfold)" stroke="#7088b8" stroke-width="0.9"/><path d="M5.5 12L9 6.5H16L13 12Z" fill="#a8d4f8" stroke="#3a5ac8" stroke-width="1"/><path d="M14.8 2.2Q14 0.8 12.8 0.8Q10.8 0.8 10.8 3.8Q10.8 6.8 12.8 6.8Q14 6.8 14.8 5.4" fill="none" stroke="#2a5a9a" stroke-width="1.5"/><path d="M3.5 8.5L7 15.5H0Z" fill="#ffcc55" stroke="#d09a30" stroke-width="0.9" stroke-linejoin="round"/><path d="M3.5 10.5V13M3.5 14V14.8" stroke="#3a2a10" stroke-width="1"/></svg>
<svg style="position:absolute;left:44px;top:142px" width="20" height="18" viewBox="0 0 20 18"><text x="2.5" y="6.5" font-family="Liberation Sans" font-size="6.5" fill="#8a8a8a">10</text><path d="M11 1V7.5L18 4.2Z" fill="#5a8aaa" stroke="#3a6a8a" stroke-width="0.8"/><circle cx="6.8" cy="11.5" r="3" fill="#b8e0c0" stroke="#1a3a6a" stroke-width="1.4"/><path d="M3 7.5L4.8 9.5M10.5 7.5L8.8 9.5M2 11.5H3.8M9.8 11.5H11.5M3 15.5L4.8 13.5M10.5 15.5L8.8 13.5" stroke="#1a3a6a" stroke-width="1.1"/><text x="11" y="16.5" font-family="Liberation Sans" font-size="6.5" fill="#8a8a8a">01</text></svg>
<svg style="position:absolute;left:46px;top:166px" width="17" height="17" viewBox="0 0 17 17"><path d="M7.5 1.5H14L16 3.5V12.5H7.5Z" fill="#fafcff" stroke="#c09850"/><path d="M4.5 3.5H11L13 5.5V14.5H4.5Z" fill="#fafcff" stroke="#c09850"/><path d="M1.5 5.5H8L10 7.5V16.5H1.5Z" fill="#f4f8ff" stroke="#c09050"/><path d="M3.8 8V15M3.8 11.5Q4.5 10.5 5.8 10.5Q7.3 10.5 7.3 12V15" fill="none" stroke="#2a4a88" stroke-width="1.3"/></svg>
<svg style="position:absolute;left:1527px;top:95px" width="7" height="18" viewBox="0 0 7 18"><rect x="1.2" y="1.2" width="7" height="5.5" fill="#cfe6fb" stroke="#2070c8" stroke-width="1.3"/><rect x="1.2" y="10.2" width="7" height="5.5" fill="#cfe6fb" stroke="#2070c8" stroke-width="1.3"/></svg>
<svg style="position:absolute;left:413px;top:777px" width="15" height="14" viewBox="0 0 15 14"><rect x="1" y="1" width="13" height="9" rx="1.5" fill="#fff" stroke="#3a6ab0" stroke-width="1.6"/><path d="M3.5 4H9M3.5 6.5H11" stroke="#3a6ab0"/><path d="M5 12H10M3 13.5H12" stroke="#3a6ab0" stroke-width="1.4"/></svg>
<svg style="position:absolute;left:500px;top:776px" width="15" height="16" viewBox="0 0 15 16"><path d="M1.5 0.5H9.5Q11 0.5 11 2V13L14 15.5H4.5Z" fill="#d8e8f8" stroke="#8090b0"/><circle cx="5" cy="4.5" r="3" fill="#e82020"/><path d="M4 9L7.5 15.5H0.5Z" fill="#ffd860" stroke="#b88a20" stroke-width="0.9"/></svg>
<svg style="position:absolute;left:597px;top:776px" width="17" height="16" viewBox="0 0 17 16"><rect x="5.5" y="0.5" width="11" height="9" fill="#fff" stroke="#404050"/><rect x="7" y="2" width="8" height="6" fill="#2a6ad8"/><path d="M1 14L8 9L11 12L4 16Z" fill="#b8b8b8" stroke="#505050" stroke-width="0.9"/></svg>
<svg style="position:absolute;left:688px;top:776px" width="16" height="15" viewBox="0 0 16 15"><rect x="0.5" y="5.5" width="5" height="9" fill="#f47a7a" stroke="#d02020"/><rect x="5.5" y="0.5" width="5" height="14" fill="#7aaaf0" stroke="#1a4ad0"/><rect x="10.5" y="7.5" width="5" height="7" fill="#80c880" stroke="#2a7a2a"/></svg>
<svg style="position:absolute;left:855px;top:776px" width="16" height="15" viewBox="0 0 16 15"><rect x="0.5" y="5.5" width="5" height="9" fill="#f47a7a" stroke="#d02020"/><rect x="5.5" y="0.5" width="5" height="14" fill="#7aaaf0" stroke="#1a4ad0"/><rect x="10.5" y="7.5" width="5" height="7" fill="#80c880" stroke="#2a7a2a"/></svg>
<svg style="position:absolute;left:1028px;top:775px" width="18" height="17"><use href="#flash" width="18" height="17"/></svg>
<svg style="position:absolute;left:1141px;top:774px" width="18" height="17" viewBox="0 0 18 17"><path d="M0.5 3.5H6M4 1.8L6 3.5L4 5.2M0.5 13.5H6M4 11.8L6 13.5L4 15.2M4 8.5H11.5M9.5 6.8L11.5 8.5L9.5 10.2" stroke="#6a7a90" stroke-width="1" fill="none"/><circle cx="8.5" cy="3.5" r="2.3" fill="#5ab85a" stroke="#2a7a2a" stroke-width="0.8"/><circle cx="8.5" cy="13.5" r="2.3" fill="#5ab85a" stroke="#2a7a2a" stroke-width="0.8"/><circle cx="14.5" cy="8.5" r="2.3" fill="#5ab85a" stroke="#2a7a2a" stroke-width="0.8"/></svg>
<svg style="position:absolute;left:1271px;top:774px" width="14" height="18" viewBox="0 0 14 18"><path d="M3.5 3.5V14.5H9M3.5 9H9" stroke="#6a7a90" stroke-width="1" fill="none"/><circle cx="3.5" cy="3.5" r="2.3" fill="#5ab85a" stroke="#2a7a2a" stroke-width="0.8"/><circle cx="9.5" cy="9" r="2.3" fill="#5ab85a" stroke="#2a7a2a" stroke-width="0.8"/><circle cx="9.5" cy="14.5" r="2.3" fill="#5ab85a" stroke="#2a7a2a" stroke-width="0.8"/></svg>
<div style="position:absolute;left:124px;top:84px;width:287px;height:148px;background:#f2f2f2;box-sizing:border-box;border:1px solid #b8b8b8;box-shadow:2px 2px 2px rgba(0,0,0,0.3)"></div>
<div style="position:absolute;left:125px;top:85px;width:32px;height:146px;background:#efefef"></div>
<div style="position:absolute;left:127px;top:86px;width:24px;height:24px;background:#91c9f7"></div>
<svg style="position:absolute;left:131px;top:91px" width="16" height="14"><path d="M2.5 7L6 10.5L13 3.5" fill="none" stroke="#333" stroke-width="1.8"/></svg>
<div id="t50" style="position:absolute;left:161.4px;top:90.2px;font:normal 15.5px/18px 'Liberation Sans', sans-serif;color:#000;white-space:pre;transform:scaleX(1.0463);transform-origin:0 0;"><u>1</u> _proj_boot_device_</div>
<div id="t51" style="position:absolute;left:161.4px;top:114.19999999999999px;font:normal 15.5px/18px 'Liberation Sans', sans-serif;color:#000;white-space:pre;transform:scaleX(1.0574);transform-origin:0 0;"><u>2</u> _proj_boot_dongle_</div>
<div id="t52" style="position:absolute;left:161.4px;top:138.2px;font:normal 15.5px/18px 'Liberation Sans', sans-serif;color:#000;white-space:pre;transform:scaleX(0.9996);transform-origin:0 0;"><u>3</u> _proj_live_mic_rx_</div>
<div id="t53" style="position:absolute;left:161.4px;top:162.2px;font:normal 15.5px/18px 'Liberation Sans', sans-serif;color:#000;white-space:pre;transform:scaleX(1.0223);transform-origin:0 0;"><u>4</u> _proj_live_mic_rx_24bits</div>
<div id="t54" style="position:absolute;left:161.4px;top:186.2px;font:normal 15.5px/18px 'Liberation Sans', sans-serif;color:#000;white-space:pre;transform:scaleX(1.0056);transform-origin:0 0;"><u>5</u> _proj_live_mic_tx_</div>
<div id="t55" style="position:absolute;left:161.4px;top:210.2px;font:normal 15.5px/18px 'Liberation Sans', sans-serif;color:#000;white-space:pre;transform:scaleX(1.0270);transform-origin:0 0;"><u>6</u> _proj_live_mic_tx_24bits</div>
<div style="position:absolute;left:118px;top:82px;width:299px;height:57px;box-sizing:border-box;border:4px solid #fe1c14;border-radius:5px;"></div>
</body></html>
